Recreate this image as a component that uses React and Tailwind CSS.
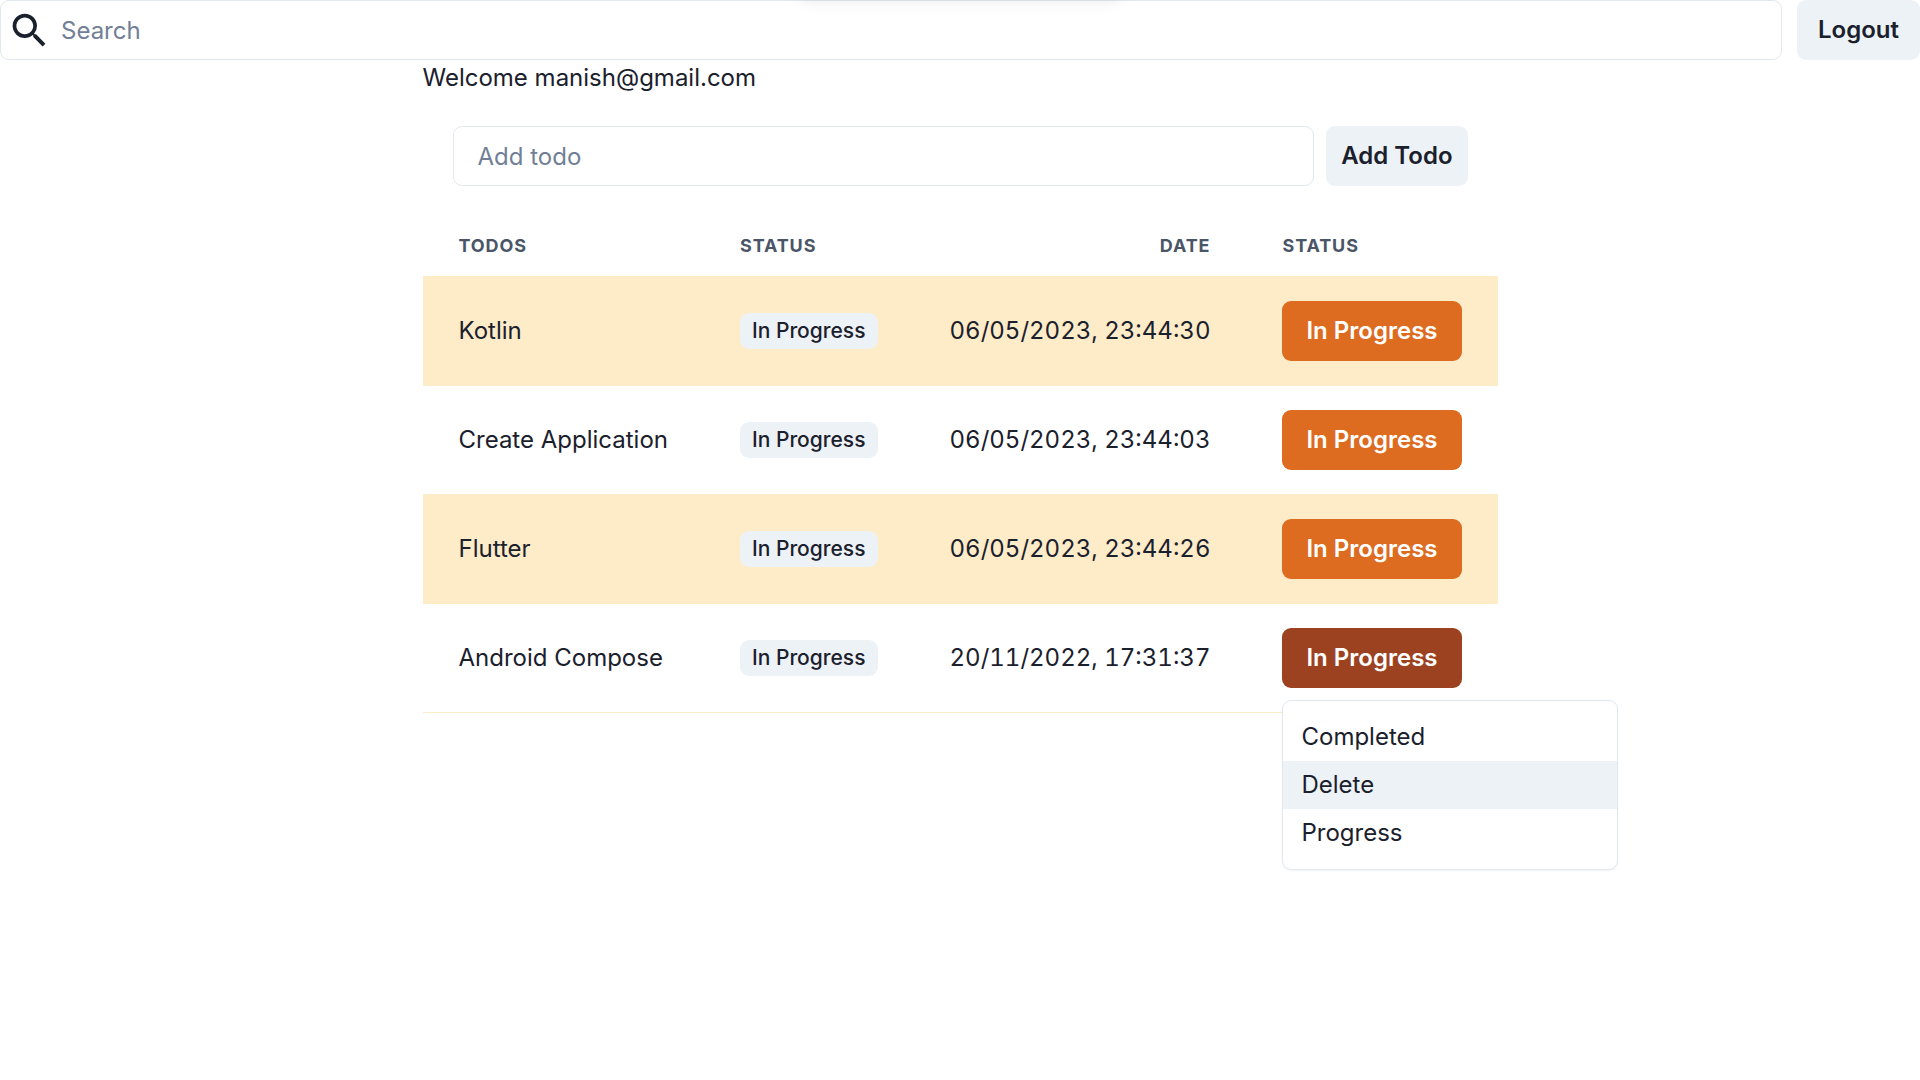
import { MdSearch } from "react-icons/md";

const todos = [
  { title: "Kotlin", date: "06/05/2023, 23:44:30" },
  { title: "Create Application", date: "06/05/2023, 23:44:03" },
  { title: "Flutter", date: "06/05/2023, 23:44:26" },
  { title: "Android Compose", date: "20/11/2022, 17:31:37", open: true },
];

const actions = [
  { label: "Completed" },
  { label: "Delete", active: true },
  { label: "Progress" },
];

function Header() {
  return (
    <header className="flex items-center gap-[15px]">
      <label className="flex h-[60px] flex-1 items-center rounded-[9px] border border-[#e2e8f0]">
        <span className="flex w-[60px] pl-1.5">
          <MdSearch size={45} aria-hidden="true" />
        </span>
        <input
          type="search"
          aria-label="Search"
          placeholder="Search"
          className="h-full min-w-0 flex-1 bg-transparent outline-none placeholder:text-[#718096]"
        />
      </label>
      <button
        type="button"
        className="h-[60px] rounded-[9px] bg-[#edf2f7] px-[21px] font-semibold"
      >
        Logout
      </button>
    </header>
  );
}

function AddTodo() {
  return (
    <form className="m-[30px] flex gap-3">
      <input
        type="text"
        aria-label="Add todo"
        placeholder="Add todo"
        className="h-[60px] min-w-0 flex-1 rounded-[9px] border border-[#e2e8f0] px-6 outline-none placeholder:text-[#718096]"
      />
      <button
        type="button"
        className="h-[60px] rounded-[9px] bg-[#edf2f7] px-[15px] font-semibold"
      >
        Add Todo
      </button>
    </form>
  );
}

function ActionMenu() {
  return (
    <div
      role="menu"
      className="absolute top-full left-0 z-10 mt-3 w-[336px] rounded-[9px] border border-[#e2e8f0] bg-white py-3 shadow-xs"
    >
      {actions.map((action) => (
        <button
          key={action.label}
          type="button"
          role="menuitem"
          className={`flex h-12 w-full items-center px-[18px] text-left ${
            action.active ? "bg-[#edf2f7]" : "bg-white"
          }`}
        >
          {action.label}
        </button>
      ))}
    </div>
  );
}

function HeadCell({ children, align = "text-left" }) {
  return (
    <th
      scope="col"
      className={`border-b border-[#feebc8] px-9 py-[18px] text-lg leading-6 font-bold tracking-wider text-[#4a5568] uppercase ${align}`}
    >
      {children}
    </th>
  );
}

function TodoRow({ todo }) {
  const cell = "border-b border-[#feebc8] px-9 py-6";
  return (
    <tr className="odd:bg-[#feebc8]">
      <td className={cell}>{todo.title}</td>
      <td className={cell}>
        <span className="flex h-9 w-fit items-center rounded-[9px] bg-[#edf2f7] px-3 text-[21px] font-medium">
          In Progress
        </span>
      </td>
      <td className={`${cell} text-right tabular-nums`}>{todo.date}</td>
      <td className={cell}>
        <div className="relative w-fit">
          <button
            type="button"
            aria-haspopup="menu"
            aria-expanded={Boolean(todo.open)}
            className={`block h-[60px] rounded-[9px] px-6 font-semibold text-white ${
              todo.open ? "bg-[#9c4221]" : "bg-[#dd6b20]"
            }`}
          >
            In Progress
          </button>
          {todo.open && <ActionMenu />}
        </div>
      </td>
    </tr>
  );
}

export default function App() {
  return (
    <div className="relative min-h-screen overflow-hidden bg-white font-['Inter','Liberation_Sans',sans-serif] text-2xl leading-9 text-[#1a202c]">
      <div className="pointer-events-none absolute bottom-full left-1/2 h-10 w-80 -translate-x-1/2 shadow-[0_0_16px_rgba(0,0,0,0.09)]" />
      <Header />
      <main className="mx-auto w-fit">
        <p>Welcome manish@gmail.com</p>
        <AddTodo />
        <table className="border-separate border-spacing-0 whitespace-nowrap">
          <thead>
            <tr>
              <HeadCell>Todos</HeadCell>
              <HeadCell>Status</HeadCell>
              <HeadCell align="text-right">Date</HeadCell>
              <HeadCell>Status</HeadCell>
            </tr>
          </thead>
          <tbody>
            {todos.map((todo) => (
              <TodoRow key={todo.title} todo={todo} />
            ))}
          </tbody>
        </table>
      </main>
    </div>
  );
}
